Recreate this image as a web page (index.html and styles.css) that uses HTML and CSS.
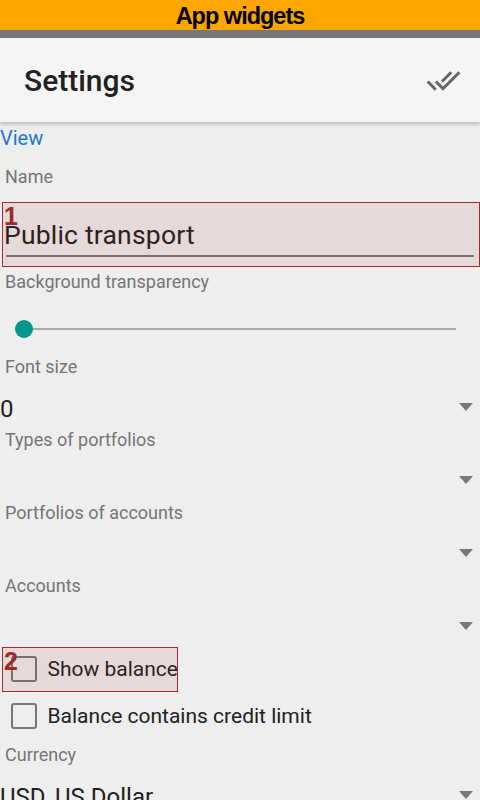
FILE: index.html
```html
<!DOCTYPE html>
<html lang="en">
<head>
<meta charset="utf-8">
<title>App widgets</title>
<link rel="stylesheet" href="styles.css">
</head>
<body>
<div class="appbar">App widgets</div>
<div class="statusline"></div>
<header class="toolbar">
  <h1 class="title">Settings</h1>
  <svg class="done-all" viewBox="0 0 24 24" width="35" height="35" aria-hidden="true">
    <path d="M18 7l-1.41-1.41-6.34 6.34 1.41 1.41L18 7zm4.24-1.41L11.66 16.17 7.48 12l-1.41 1.41L11.66 19l12-12-1.42-1.41zM.41 13.41L6 19l1.41-1.41L1.83 12 .41 13.41z"/>
  </svg>
</header>
<main class="content">
  <a class="view">View</a>
  <div class="label label-name">Name</div>
  <div class="edit">
    <div class="edit-text">Public transport</div>
    <div class="edit-line"></div>
    <div class="mark mark-edit"><span class="mark-num">1</span></div>
  </div>
  <div class="label label-bg">Background transparency</div>
  <div class="slider">
    <div class="thumb"></div>
    <div class="track"></div>
  </div>
  <div class="label label-first">Font size</div>
  <div class="spinner"><span class="value">0</span><span class="arrow"></span></div>
  <div class="label">Types of portfolios</div>
  <div class="spinner"><span class="value"></span><span class="arrow"></span></div>
  <div class="label">Portfolios of accounts</div>
  <div class="spinner"><span class="value"></span><span class="arrow"></span></div>
  <div class="label">Accounts</div>
  <div class="spinner"><span class="value"></span><span class="arrow"></span></div>
  <div class="check-row">
    <span class="checkbox"></span>
    <span class="check-text">Show balance</span>
    <div class="mark mark-check"><span class="mark-num">2</span></div>
  </div>
  <div class="check-row check-row-second">
    <span class="checkbox"></span>
    <span class="check-text">Balance contains credit limit</span>
  </div>
  <div class="label label-currency">Currency</div>
  <div class="spinner"><span class="value">USD, US Dollar</span><span class="arrow"></span></div>
</main>
</body>
</html>
```
FILE: styles.css
```css
* { box-sizing: border-box; }
html, body { margin: 0; padding: 0; }
body {
  background: #eeeeee;
  font-family: Roboto, "Noto Sans", sans-serif;
  width: 480px;
  height: 800px;
  overflow: hidden;
}
.appbar {
  height: 30px;
  background: #ffa500;
  color: #000;
  text-align: center;
  font-family: "Liberation Sans", Arial, sans-serif;
  font-weight: bold;
  font-size: 23.5px;
  line-height: 32px;
  letter-spacing: -1px;
}
.statusline {
  height: 8px;
  background: #777777;
}
.toolbar {
  position: relative;
  z-index: 1;
  height: 84px;
  background: #f5f5f5;
  display: flex;
  align-items: center;
  padding-left: 24px;
  padding-right: 19px;
  box-shadow: 0 2px 4px rgba(0,0,0,0.22);
}
.title {
  margin: 0;
  font-size: 30px;
  font-weight: 500;
  color: #212121;
  flex: 1;
}
.done-all {
  fill: #666666;
  flex: none;
}
.content {
  display: flex;
  flex-direction: column;
}
.view {
  display: block;
  margin-top: 4px;
  font-size: 20px;
  line-height: 24px;
  color: #1976d2;
}
.label {
  font-size: 18px;
  line-height: 22px;
  color: #757575;
  padding-left: 5px;
}
.label-name { margin-top: 16px; }
.edit {
  position: relative;
  padding-top: 31.5px;
}
.edit-text {
  font-size: 26.5px;
  line-height: 30px;
  letter-spacing: 0.2px;
  color: #212121;
  padding-left: 4px;
}
.edit-line {
  margin: 5.5px 6px 0 6px;
  height: 2px;
  background: #777777;
}
.mark {
  position: absolute;
  border: 1px solid #a52a2a;
  background: rgba(165, 42, 42, 0.1);
}
.mark-num {
  position: absolute;
  left: 1px;
  top: 1px;
  font-family: "Liberation Sans", Arial, sans-serif;
  font-weight: bold;
  font-size: 25px;
  line-height: 24px;
  color: #9b2b2b;
}
.mark-edit {
  left: 2px;
  top: 14px;
  width: 478px;
  height: 65px;
}
.label-bg { margin-top: 14px; }
.slider {
  display: flex;
  align-items: center;
  height: 20px;
  margin: 26px 24px 0 15px;
}
.thumb {
  width: 18px;
  height: 18px;
  border-radius: 50%;
  background: #009688;
  flex: none;
}
.track {
  flex: 1;
  height: 2px;
  background: #aaaaaa;
}
.label-first { margin-top: 17px; }
.spinner {
  height: 51px;
  display: flex;
  align-items: flex-start;
}
.value {
  margin-top: 17px;
  font-size: 24px;
  line-height: 28px;
  color: #212121;
  white-space: nowrap;
}
.arrow {
  margin-top: 25px;
  margin-left: auto;
  margin-right: 7.5px;
  width: 0;
  height: 0;
  border-left: 7px solid transparent;
  border-right: 7px solid transparent;
  border-top: 8.5px solid #777777;
}
.check-row {
  position: relative;
  height: 42px;
  display: flex;
  align-items: center;
  padding-left: 11px;
}
.check-row-second { margin-top: 5px; }
.checkbox {
  width: 26px;
  height: 26px;
  border: 2.5px solid #777777;
  border-radius: 3px;
  flex: none;
}
.check-text {
  margin-left: 10.5px;
  font-size: 21px;
  color: #212121;
}
.mark-check {
  left: 2px;
  top: -1px;
  width: 176px;
  height: 45px;
}
.label-currency { margin-top: 7px; }
```
